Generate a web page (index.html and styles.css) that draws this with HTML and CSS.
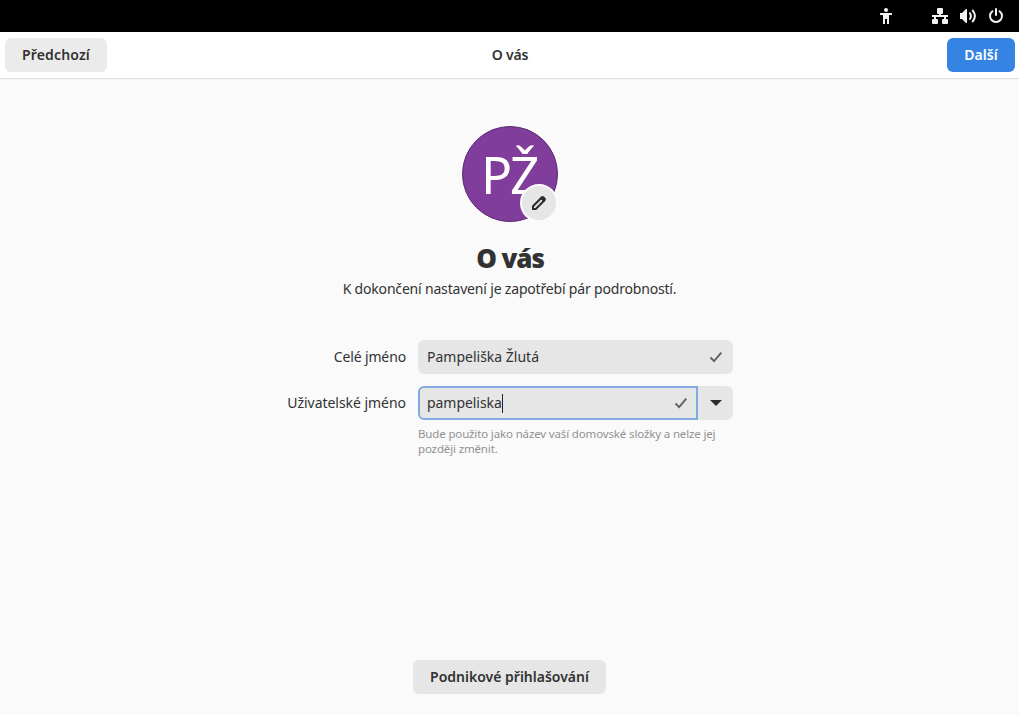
FILE: index.html
```html
<!DOCTYPE html>
<html lang="cs">
<head>
<meta charset="utf-8">
<title>O vás</title>
<link rel="stylesheet" href="styles.css">
</head>
<body>
<div class="topbar">
  <svg class="icon access" width="16" height="16" viewBox="0 0 16 16"><circle cx="8" cy="2" r="2"/><path d="M2.5 5h11q.5 0 .5.5V7h-3v9H9v-5H7v5H5V7H2V5.500q0-.5.5-.5z"/></svg>
  <svg class="icon" width="16" height="16" viewBox="0 0 16 16"><path d="M6 0h4q1 0 1 1v4q0 1-1 1H9v1h7v2h-2v2h1q1 0 1 1v3q0 1-1 1h-4q-1 0-1-1v-3q0-1 1-1h1V9H4v2h1q1 0 1 1v3q0 1-1 1H1q-1 0-1-1v-3q0-1 1-1h1V9H0V7h7V6H6Q5 6 5 5V1q0-1 1-1z"/></svg>
  <svg class="icon" width="16" height="16" viewBox="0 0 16 16"><path d="M0 5h2l4-4h1v14H6l-4-4H0z"/><path class="wave" d="M10 5.2q1.800 2.800 0 5.600M12.800 2.600q4.200 5.400 0 10.800"/></svg>
  <svg class="icon" width="16" height="16" viewBox="0 0 16 16"><path class="wave" d="M4.400 3.200a6 6 0 1 0 7.200 0M8 1v6"/></svg>
</div>
<header class="header">
  <button class="btn back"><span>Předchozí</span></button>
  <div class="title"><span>O vás</span></div>
  <button class="btn next"><span>Další</span></button>
</header>
<main class="page">
  <div class="avatar"><span class="initials">PŽ</span>
    <div class="edit"><svg width="16" height="16" viewBox="0 0 16 16"><path class="pencil" d="M2 14v-2.800l8.200-8.200 2.800 2.800L4.800 14z"/><path d="M9 3l1.400-1.400q1.200-1.100 2.500 0l1.500 1.500q1.100 1.300 0 2.500L13 7zM1 11l4 4H1z"/></svg></div>
  </div>
  <h1 class="heading"><span>O vás</span></h1>
  <p class="subtitle"><span>K dokončení nastavení je zapotřebí pár podrobností.</span></p>
  <div class="form">
    <label class="label name-label">Celé jméno</label>
    <div class="entry"><span class="name-text">Pampeliška Žlutá</span><svg class="check" width="16" height="16" viewBox="0 0 16 16"><path d="M2.500 8.500l3.600 3.600L13.300 3.700"/></svg></div>
    <label class="label user-label">Uživatelské jméno</label>
    <div class="combo">
      <div class="entry focused"><span class="user-text">pampeliska</span><i class="caret"></i><svg class="check" width="16" height="16" viewBox="0 0 16 16"><path d="M2.500 8.500l3.600 3.600L13.300 3.700"/></svg></div>
      <div class="drop"><svg width="12" height="6" viewBox="0 0 12 6"><path d="M0 0h12L6 6z"/></svg></div>
    </div>
    <p class="hint"><span>Bude použito jako název vaší domovské složky a nelze jej</span><br><span>později změnit.</span></p>
  </div>
  <button class="btn enterprise"><span>Podnikové přihlašování</span></button>
</main>
</body>
</html>
```
FILE: styles.css
```css
* { box-sizing: border-box; }
body { margin: 0; height: 715px; display: flex; flex-direction: column; overflow: hidden; background: #fafafa; color: #323232; font: 14px/20px "Noto Sans", sans-serif; }
svg { display: block; flex: none; }
span { white-space: nowrap; }
.topbar { height: 32px; flex: none; background: #000; display: flex; align-items: center; justify-content: flex-end; gap: 12px; padding-right: 15px; }
.icon { fill: #f2f2f2; }
.access { margin-right: 26px; }
.wave { fill: none; stroke: #f2f2f2; stroke-width: 2; stroke-linecap: round; }
.header { height: 47px; flex: none; background: #fff; border-bottom: 1px solid #dedede; box-shadow: 0 1px 2px #0000000a; display: grid; grid-template-columns: 102px 1fr 102px; align-items: center; padding: 0 4px 0 5px; }
.btn { height: 34px; border: 0; border-radius: 6px; background: #e6e6e6; color: #323232; font: 600 14px/20px "Noto Sans", sans-serif; padding: 0; display: flex; align-items: center; justify-content: center; }
.back { width: 102px; background: #ebebeb; letter-spacing: .15px; }
.next { width: 68px; background: #3584e4; color: #fff; justify-self: end; }
.title { font-weight: 600; letter-spacing: -.2px; text-align: center; }
.page { flex: 1; display: flex; flex-direction: column; align-items: center; padding: 47px 0 21px; }
.avatar { position: relative; width: 96px; height: 96px; flex: none; border-radius: 50%; background: #813d9c; border: 1px solid #5b2a70; color: #fff; display: flex; align-items: center; justify-content: center; }
.initials { font-size: 51.5px; line-height: 68px; letter-spacing: -1.5px; }
.edit { position: absolute; left: 57px; top: 57px; width: 38px; height: 38px; border-radius: 50%; border: 2px solid #fafafa; background: #e6e6e6; display: flex; align-items: center; justify-content: center; fill: #2c2c2c; }
.pencil { fill: none; stroke: #2c2c2c; stroke-width: 2; }
.heading { margin: 18px 0 0 1px; font-size: 26px; line-height: 36px; font-weight: 900; letter-spacing: -1.1px; }
.subtitle { margin: 3px 0 0; letter-spacing: -.18px; }
.form { width: 446px; margin: 41px 0 0 1px; display: grid; grid-template-columns: 119px 315px; column-gap: 12px; row-gap: 12px; }
.label { text-align: right; line-height: 33px; white-space: nowrap; justify-self: end; }
.name-label { letter-spacing: -.13px; }
.user-label { letter-spacing: -.04px; }
.user-text { letter-spacing: -.05px; }
.entry { height: 34px; background: #e6e6e6; border-radius: 6px; padding: 0 9px; display: flex; align-items: center; }
.entry span { line-height: 18px; padding-bottom: 1px; }
.check { margin-left: auto; fill: none; stroke: #636363; stroke-width: 2; }
.combo { display: flex; }
.focused { width: 280px; border: 2px solid #81abe0; border-radius: 6px 0 0 6px; padding: 0 7px; }
.caret { width: 1px; height: 19px; background: #222; }
.drop { width: 35px; background: #e6e6e6; border-radius: 0 6px 6px 0; display: flex; align-items: center; justify-content: center; fill: #2c2c2c; }
.hint { grid-column: 2; margin: -6px 0 0; font-size: 11.5px; line-height: 15px; letter-spacing: -.145px; color: #929292; }
.enterprise { width: 193px; margin-top: auto; }
```
